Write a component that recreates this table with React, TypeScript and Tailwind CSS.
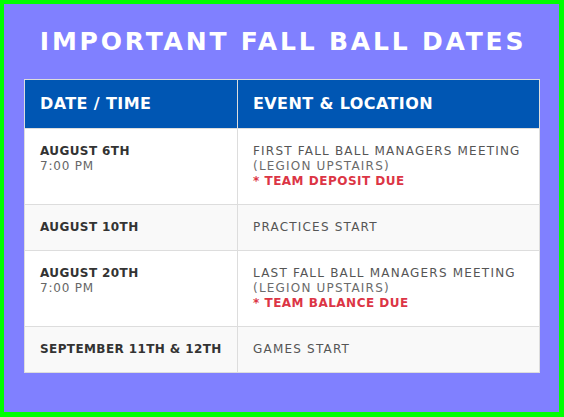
const ROWS: Array<{ date: string; time?: string; event: string; place?: string; note?: string }> = [
  {
    date: "AUGUST 6TH",
    time: "7:00 PM",
    event: "FIRST FALL BALL MANAGERS MEETING",
    place: "(LEGION UPSTAIRS)",
    note: "* TEAM DEPOSIT DUE",
  },
  { date: "AUGUST 10TH", event: "PRACTICES START" },
  {
    date: "AUGUST 20TH",
    time: "7:00 PM",
    event: "LAST FALL BALL MANAGERS MEETING",
    place: "(LEGION UPSTAIRS)",
    note: "* TEAM BALANCE DUE",
  },
  { date: "SEPTEMBER 11TH & 12TH", event: "GAMES START" },
];

export default function App() {
  return (
    <div className="h-[417px] w-[564px] border-t-4 border-l-4 border-r-[5px] border-b-[5px] border-[#00ff00] bg-[#8080ff] font-['DejaVu_Sans',sans-serif]">
      <h1 className="pt-[22px] pl-[3px] text-center text-[25px] font-bold leading-[32px] tracking-[2.8px] text-white">
        IMPORTANT FALL BALL DATES
      </h1>

      <div className="ml-[20px] mt-[21px] w-[516px] border border-[#dddddd]">
        <div className="flex bg-[#0056b3] text-[16px] font-bold leading-[20px] tracking-[0.4px] text-white">
          <div className="w-[213px] border-r border-[#dddddd] px-[15px] py-[14px]">DATE / TIME</div>
          <div className="flex-1 px-[15px] py-[14px]">EVENT &amp; LOCATION</div>
        </div>

        {ROWS.map((r, i) => (
          <div
            key={r.date}
            className={`flex border-t border-[#dddddd] text-[12px] leading-[15px] ${
              i % 2 === 1 ? "bg-[#f9f9f9]" : "bg-white"
            }`}
          >
            <div className="w-[213px] border-r border-[#dddddd] px-[15px] py-[15px]">
              <div className="whitespace-nowrap font-bold tracking-[0.4px] text-[#333333]">{r.date}</div>
              {r.time && <div className="tracking-[0.8px] text-[#666666]">{r.time}</div>}
            </div>
            <div className="flex-1 px-[15px] py-[15px] tracking-[1.2px] text-[#555555]">
              <div>{r.event}</div>
              {r.place && <div className="text-[#6b6b6b]">{r.place}</div>}
              {r.note && <div className="font-bold tracking-[0.5px] text-[#dc3545]">{r.note}</div>}
            </div>
          </div>
        ))}
      </div>
    </div>
  );
}
